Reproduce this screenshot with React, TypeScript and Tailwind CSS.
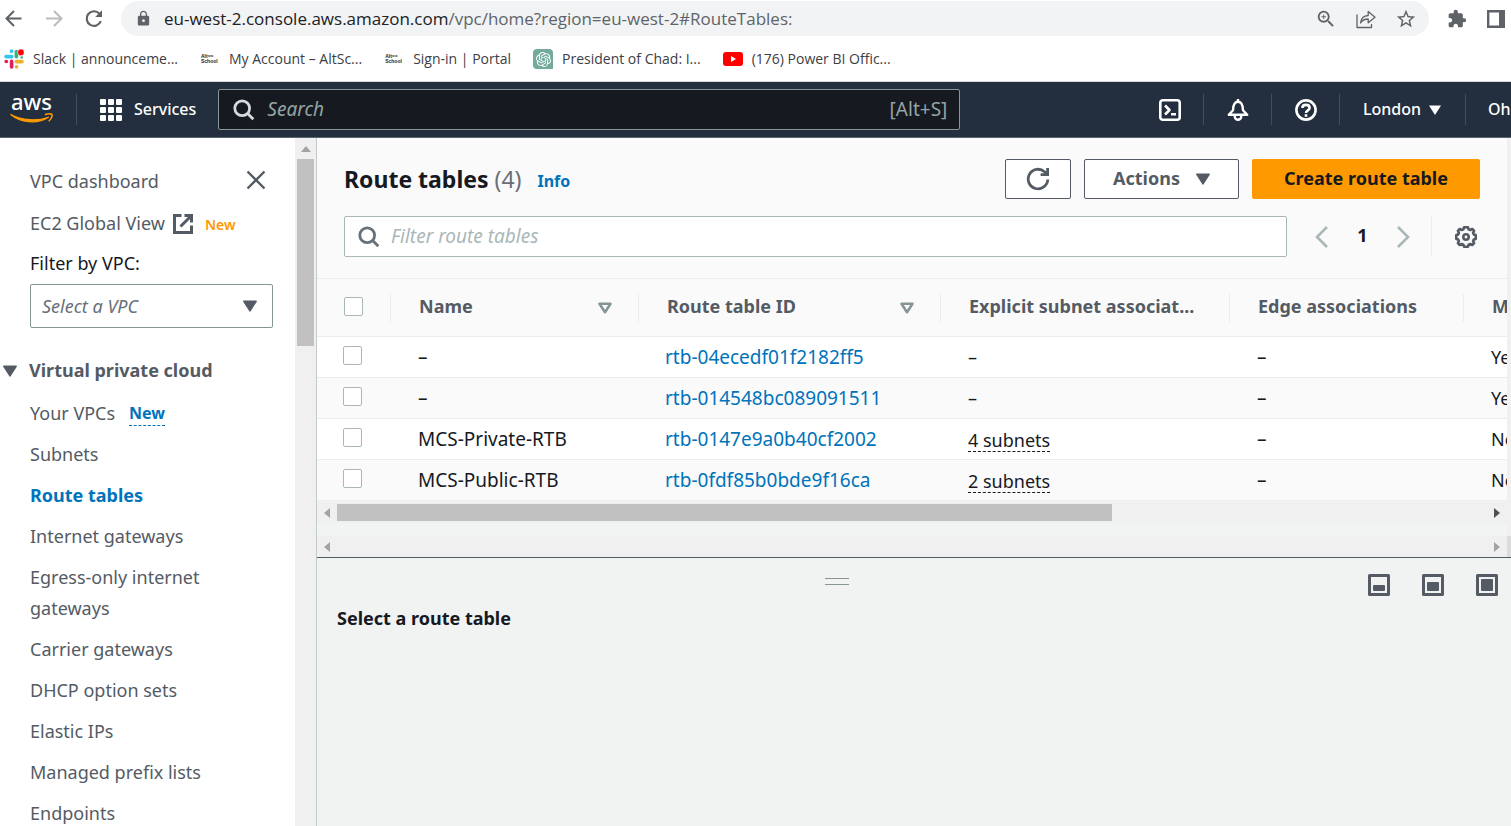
import { useState } from "react";
import type { ReactNode } from "react";
import { MdExtension, MdLock, MdOutlineZoomIn, MdStarBorder } from "react-icons/md";
import { SiOpenai } from "react-icons/si";

type RouteTable = {
  name: string;
  id: string;
  subnets: string;
  edge: string;
  main: string;
};

const routeTables: RouteTable[] = [
  { name: "–", id: "rtb-04ecedf01f2182ff5", subnets: "–", edge: "–", main: "Yes" },
  { name: "–", id: "rtb-014548bc089091511", subnets: "–", edge: "–", main: "Yes" },
  { name: "MCS-Private-RTB", id: "rtb-0147e9a0b40cf2002", subnets: "4 subnets", edge: "–", main: "No" },
  { name: "MCS-Public-RTB", id: "rtb-0fdf85b0bde9f16ca", subnets: "2 subnets", edge: "–", main: "No" },
];

const vpcLinks = [
  "Your VPCs",
  "Subnets",
  "Route tables",
  "Internet gateways",
  "Egress-only internet gateways",
  "Carrier gateways",
  "DHCP option sets",
  "Elastic IPs",
  "Managed prefix lists",
  "Endpoints",
];

function CaretDown({ className = "" }: { className?: string }) {
  return (
    <svg viewBox="0 0 14 12" className={`h-3 w-3.5 shrink-0 ${className}`} fill="currentColor" stroke="currentColor" strokeWidth="1.6" strokeLinejoin="round" aria-hidden="true">
      <path d="M.9 1.200h12.200L7 10.800z" />
    </svg>
  );
}

function SortIcon() {
  return (
    <svg viewBox="0 0 14 12" className="h-3 w-3.5 shrink-0 text-[#879596]" fill="none" stroke="currentColor" strokeWidth="2.6" strokeLinejoin="round" aria-hidden="true">
      <path d="M1.500 1.800h11L7 10.200z" />
    </svg>
  );
}

function SearchIcon({ className = "" }: { className?: string }) {
  return (
    <svg viewBox="0 0 22 22" className={`h-[22px] w-[22px] shrink-0 ${className}`} fill="none" stroke="currentColor" strokeWidth="2.800" aria-hidden="true">
      <circle cx="9.200" cy="9.200" r="7.400" />
      <path d="M14.300 14.300l6 6" />
    </svg>
  );
}

function SlackIcon() {
  return (
    <svg viewBox="0 0 20 20" className="h-5 w-5" fill="none" strokeLinecap="round" strokeWidth="3.600" aria-hidden="true">
      <path d="M2 7.600h5.800M7.500 2v.4" stroke="#36c5f0" />
      <path d="M12.400 2.500v5.300" stroke="#2eb67d" />
      <path d="M12.400 12.600h5.600M12.600 17.800v.2" stroke="#ecb22e" />
      <path d="M7.600 12.400v5.600M2.200 12.500h.2" stroke="#e01e5a" />
      <circle cx="17" cy="3.400" r="3.400" fill="#f00" stroke="#fff" strokeWidth=".6" />
      <path d="M17.600 8.400h.2" stroke="#2eb67d" strokeWidth="2.400" />
    </svg>
  );
}

function AltSchoolIcon() {
  return (
    <span className="flex w-5 flex-col justify-center pl-px font-['Liberation_Sans',sans-serif] text-[5px] leading-[5px] font-bold text-[#222]" aria-hidden="true">
      <span>Alt==</span>
      <span>School</span>
    </span>
  );
}

function ChatIcon() {
  return (
    <span className="flex h-5 w-5 items-center justify-center rounded-sm rounded-br-none bg-[#74aa9c] text-white">
      <SiOpenai size={15} />
    </span>
  );
}

function YoutubeIcon() {
  return (
    <svg viewBox="0 0 20 14" className="h-3.5 w-5" aria-hidden="true">
      <rect width="20" height="14" rx="3" fill="#f00" />
      <path d="M8 4l5 3-5 3z" fill="#fff" />
    </svg>
  );
}

const bookmarks: { label: string; icon: ReactNode }[] = [
  { label: "Slack | announceme...", icon: <SlackIcon /> },
  { label: "My Account – AltSc...", icon: <AltSchoolIcon /> },
  { label: "Sign-in | Portal", icon: <AltSchoolIcon /> },
  { label: "President of Chad: I...", icon: <ChatIcon /> },
  { label: "(176) Power BI Offic...", icon: <YoutubeIcon /> },
];

function BrowserBar() {
  return (
    <div className="shrink-0 border-b border-[#d5d8dc] bg-white font-['Open_Sans','Noto_Sans',sans-serif]">
      <div className="flex h-[37px] items-center pr-1.5 text-[#5f6368]">
        <div className="flex w-[121px] shrink-0 items-center gap-5 pl-1">
          <button type="button" aria-label="Back" className="flex h-5 w-5 items-center justify-center">
            <svg viewBox="0 0 20 20" className="h-5 w-5" fill="none" stroke="currentColor" strokeWidth="2">
              <path d="M17.500 9.500H2.500M10 2L2.500 9.500 10 17" />
            </svg>
          </button>
          <button type="button" aria-label="Forward" className="flex h-5 w-5 items-center justify-center text-[#babcbe]">
            <svg viewBox="0 0 20 20" className="h-5 w-5" fill="none" stroke="currentColor" strokeWidth="2">
              <path d="M2 9.500h15M10 2l7.500 7.500L10 17" />
            </svg>
          </button>
          <button type="button" aria-label="Reload" className="flex h-5 w-5 items-center justify-center">
            <svg viewBox="0 0 20 20" className="h-5 w-5" fill="none" stroke="currentColor" strokeWidth="2.200">
              <path d="M16.800 12.200A7.300 7.300 0 1 1 15.300 4.500" />
              <path d="M18 1.200v6.800h-6.800z" fill="currentColor" stroke="none" />
            </svg>
          </button>
        </div>
        <div className="flex h-[35px] min-w-0 flex-1 items-center rounded-full bg-[#f1f3f4] pr-3 pl-[14px]">
          <MdLock size={17} className="shrink-0" />
          <p className="ml-3 min-w-0 flex-1 truncate text-[17px] leading-6 text-[#5f6368]">
            <span className="text-[#202124]">eu-west-2.console.aws.amazon.com</span>
            /vpc/home?region=eu-west-2#RouteTables:
          </p>
          <div className="flex items-center gap-[19px]">
            <button type="button" aria-label="Zoom">
              <MdOutlineZoomIn size={22} />
            </button>
            <button type="button" aria-label="Share">
              <svg viewBox="0 0 20 20" className="h-5 w-5" fill="none" stroke="currentColor" strokeWidth="1.300" strokeLinejoin="round">
                <path d="M1 5.500v13h14.500v-3.500" />
                <path d="M4.500 14c.6-4.800 3.200-7.300 7.700-7.500V2.500L19 8.200l-6.800 5.600V10c-3.400 0-5.900 1.200-7.700 4z" />
              </svg>
            </button>
            <button type="button" aria-label="Bookmark this tab">
              <MdStarBorder size={22} />
            </button>
          </div>
        </div>
        <div className="ml-[18px] flex items-center gap-5">
          <button type="button" aria-label="Extensions">
            <MdExtension size={20} />
          </button>
          <button type="button" aria-label="Side panel">
            <svg viewBox="0 0 18 18" className="h-[18px] w-[18px]" fill="none">
              <path d="M1.200 1.200h15.600v15.600H1.200z" stroke="currentColor" strokeWidth="2.400" />
              <path d="M12 1h5v16h-5z" fill="currentColor" />
            </svg>
          </button>
        </div>
      </div>
      <nav aria-label="Bookmarks" className="flex h-11 items-center gap-[22px] pl-1">
        {bookmarks.map((b) => (
          <a key={b.label} href="#" className="flex items-center gap-[9px] text-[14px] leading-5 whitespace-nowrap text-[#3c4043]">
            {b.icon}
            {b.label}
          </a>
        ))}
      </nav>
    </div>
  );
}

function ConsoleHeader() {
  return (
    <header className="flex h-14 shrink-0 items-center overflow-hidden border-b border-[#5a6472] bg-[#232f3e] text-white">
      <a href="#" aria-label="AWS home" className="ml-2.5 flex w-[43px] shrink-0 flex-col items-center">
        <span className="text-[22px] leading-[15px] font-medium">aws</span>
        <svg viewBox="0 0 43 12" className="mt-1 h-3 w-[43px]" fill="none" stroke="#f90" strokeLinecap="round" strokeLinejoin="round" aria-hidden="true">
          <path d="M.8 1.500C10 9.500 27 11.800 38.500 4.200 27 8.500 12 7.500.8 1.500z" fill="#f90" strokeWidth="1.200" />
          <path d="M35.500 1.400c2-.8 5.500-.8 6.300 0 .5 1.200-.4 4.200-2.600 6.400" strokeWidth="1.600" />
        </svg>
      </a>
      <span className="ml-[23px] h-[31px] w-px shrink-0 bg-[#414d5c]" />
      <button type="button" className="ml-[23px] flex shrink-0 items-center gap-3 text-[16px] leading-6 font-medium">
        <svg viewBox="0 0 22 22" className="h-[22px] w-[22px]" fill="currentColor" aria-hidden="true">
          {[0, 8, 16].map((y) =>
            [0, 8, 16].map((x) => <rect key={`${x}-${y}`} x={x} y={y} width="6" height="6" rx="1" />),
          )}
        </svg>
        <span className="pb-0.5">Services</span>
      </button>
      <label className="ml-[22px] flex h-[41px] max-w-[742px] min-w-0 flex-1 items-center rounded-xs border border-[#879596] bg-[#16191f] pr-3 pl-[14px] text-[#95a5a6]">
        <SearchIcon className="text-[#d5dbdb]" />
        <input
          type="search"
          aria-label="Search"
          placeholder="Search"
          className="ml-3 min-w-0 flex-1 bg-transparent text-[19px] italic outline-none placeholder:text-[#95a5a6]"
        />
        <span className="text-[19px]">[Alt+S]</span>
      </label>
      <div className="ml-auto flex shrink-0 items-center">
        <button type="button" aria-label="CloudShell" className="flex h-[31px] w-[68px] items-center justify-center border-r border-[#414d5c]">
          <svg viewBox="0 0 22 22" className="h-[22px] w-[22px]" fill="none" stroke="currentColor" strokeWidth="2.600" strokeLinejoin="round">
            <rect x="1.300" y="1.300" width="19.400" height="19.400" rx="2.500" />
            <path d="M6 6.500l4.500 4.500L6 15.500M12 15.300h5" />
          </svg>
        </button>
        <button type="button" aria-label="Notifications" className="flex h-[31px] w-[68px] items-center justify-center border-r border-[#414d5c]">
          <svg viewBox="0 0 22 22" className="h-[22px] w-[22px]" fill="none" stroke="currentColor" strokeWidth="2.400" strokeLinejoin="round">
            <path d="M11 0v3" />
            <path d="M1.800 15.800h18.400L16 11.200C15.800 6 14.500 2.800 11 2.800S6.200 6 6 11.200z" />
            <path d="M7.800 16.500v1.300a3.200 3 0 0 0 6.400 0v-1.300" />
          </svg>
        </button>
        <button type="button" aria-label="Help" className="flex h-[31px] w-[68px] items-center justify-center border-r border-[#414d5c]">
          <svg viewBox="0 0 22 22" className="h-[22px] w-[22px]" fill="none" stroke="currentColor" strokeWidth="2.600">
            <circle cx="11" cy="11" r="9.600" />
            <path d="M7.400 9c0-4.200 7.200-4.200 7.200 0 0 2.500-3.600 2.200-3.600 5" />
            <path d="M11 15.200v2.600" />
          </svg>
        </button>
        <button type="button" className="flex h-[31px] w-[126px] items-center gap-2 border-r border-[#414d5c] pl-[23px] text-[16px] font-medium">
          <span className="pb-0.5">London</span>
          <svg viewBox="0 0 12 10" className="h-2.5 w-3" fill="currentColor" aria-hidden="true">
            <path d="M0 .5h12L6 10z" />
          </svg>
        </button>
        <button type="button" className="h-[31px] w-[45px] overflow-hidden pb-0.5 pl-[22px] text-left text-[16px] font-medium whitespace-nowrap">
          Oh
        </button>
      </div>
    </header>
  );
}

function Sidebar() {
  return (
    <aside className="flex w-[316px] shrink-0 bg-white text-[18px] leading-[31px] text-[#545b64]">
      <div className="min-w-0 flex-1 overflow-hidden pt-7">
        <div className="flex flex-col gap-2.5 pr-[22px] pl-[30px]">
          <div className="flex items-center justify-between">
            <a href="#">VPC dashboard</a>
            <button type="button" aria-label="Close navigation" className="mr-[7px] pb-1">
              <svg viewBox="0 0 20 20" className="h-5 w-5" fill="none" stroke="currentColor" strokeWidth="2.400">
                <path d="M1.500 1.500l17 17M18.500 1.500l-17 17" />
              </svg>
            </button>
          </div>
          <div className="flex items-center">
            <a href="#" className="flex items-center gap-2">
              EC2 Global View
              <svg viewBox="0 0 20 20" className="h-5 w-5" fill="none" stroke="currentColor" strokeWidth="3" aria-hidden="true">
                <path d="M8.500 1.500h-7v17h17v-7" />
                <path d="M11.500 1.500h7v7M18 2L7.500 12.500" />
              </svg>
            </a>
            <span className="ml-3 pt-0.5 text-[14px] font-semibold text-[#ff9900]">New</span>
          </div>
        </div>
        <div className="mt-2 pr-[22px] pl-[30px]">
          <label htmlFor="vpc-filter" className="block text-[#16191f]">
            Filter by VPC:
          </label>
          <div className="relative mt-[5px]">
            <select
              id="vpc-filter"
              className="h-11 w-full appearance-none rounded-xs border border-[#879596] bg-white pl-[11px] text-[18px] text-[#687078] italic outline-none"
            >
              <option>Select a VPC</option>
            </select>
            <CaretDown className="pointer-events-none absolute top-4 right-4 text-[#545b64]" />
          </div>
        </div>
        <button type="button" className="mt-[27px] flex items-center gap-3 pl-[3px] font-bold">
          <CaretDown />
          Virtual private cloud
        </button>
        <ul className="mt-3 flex flex-col gap-2.5 pr-[22px] pl-[30px]">
          {vpcLinks.map((link) => (
            <li key={link} className="flex items-center">
              <a href="#" className={link === "Route tables" ? "font-bold text-[#0073bb]" : ""}>
                {link}
              </a>
              {link === "Your VPCs" && (
                <button type="button" className="ml-3.5 border-b border-dashed border-[#0073bb] text-[16px] leading-6 font-bold text-[#0073bb]">
                  New
                </button>
              )}
            </li>
          ))}
        </ul>
      </div>
      <div className="w-[21px] shrink-0 bg-[#f0f0f0] px-0.5" aria-hidden="true">
        <div className="flex h-[21px] items-center justify-center">
          <svg viewBox="0 0 10 6" className="h-1.5 w-2.5" fill="#a3a3a3">
            <path d="M5 0l5 6H0z" />
          </svg>
        </div>
        <div className="h-[187px] bg-[#c1c1c1]" />
      </div>
    </aside>
  );
}

function ScrollArrow({ direction, color }: { direction: "left" | "right"; color: string }) {
  return (
    <span className="flex w-5 shrink-0 items-center justify-center">
      <svg viewBox="0 0 6 10" className="h-2.5 w-1.5" fill={color}>
        <path d={direction === "left" ? "M6 0v10L0 5z" : "M0 0v10l6-5z"} />
      </svg>
    </span>
  );
}

function HeaderCell({ label, sortable, last }: { label: string; sortable?: boolean; last?: boolean }) {
  return (
    <th scope="col" className="p-0 text-left font-bold">
      <div className={`flex h-7 items-center justify-between pr-[26px] pl-7 ${last ? "" : "border-r border-[#eaeded]"}`}>
        <span className="pb-1 whitespace-nowrap">{label}</span>
        {sortable && <SortIcon />}
      </div>
    </th>
  );
}

function Tick({ label, checked, onChange }: { label: string; checked: boolean; onChange: () => void }) {
  return (
    <input
      type="checkbox"
      aria-label={label}
      checked={checked}
      onChange={onChange}
      className="mb-[3px] block h-[19px] w-[19px] appearance-none rounded-xs border border-[#aab7b8] bg-white checked:bg-[#0073bb]"
    />
  );
}

function RouteTableGrid() {
  const [selected, setSelected] = useState<string[]>([]);
  const toggle = (id: string) =>
    setSelected((s) => (s.includes(id) ? s.filter((x) => x !== id) : [...s, id]));
  const all = selected.length === routeTables.length;

  return (
    <div className="overflow-hidden pb-px">
      <table className="w-[1765px] table-fixed border-collapse text-[19px] leading-6">
        <colgroup>
          <col className="w-[74px]" />
          <col className="w-[248px]" />
          <col className="w-[302px]" />
          <col className="w-[289px]" />
          <col className="w-[234px]" />
          <col />
        </colgroup>
        <thead className="text-[18px]">
          <tr className="h-[58px] border-y border-[#eaeded] bg-[#fafafa] text-[#545b64]">
            <th scope="col" className="p-0">
              <div className="flex h-7 items-center border-r border-[#eaeded] pl-[27px]">
                <Tick
                  label="Select all route tables"
                  checked={all}
                  onChange={() => setSelected(all ? [] : routeTables.map((r) => r.id))}
                />
              </div>
            </th>
            <HeaderCell label="Name" sortable />
            <HeaderCell label="Route table ID" sortable />
            <HeaderCell label="Explicit subnet associat..." />
            <HeaderCell label="Edge associations" />
            <HeaderCell label="Main" last />
          </tr>
        </thead>
        <tbody className="text-[#16191f]">
          {routeTables.map((r) => (
            <tr key={r.id} className="h-[41px] border-b border-[#eaeded] bg-white even:bg-[#fafafa]">
              <td className="p-0 pl-[26px]">
                <Tick label={`Select ${r.id}`} checked={selected.includes(r.id)} onChange={() => toggle(r.id)} />
              </td>
              <td className="p-0 pl-[27px]">{r.name}</td>
              <td className="p-0 pl-[26px]">
                <a href="#" className="text-[#0073bb]">
                  {r.id}
                </a>
              </td>
              <td className="p-0 pl-[27px] text-[18px]">
                {r.subnets === "–" ? (
                  r.subnets
                ) : (
                  <button type="button" className="mt-0.5 block border-b border-dashed border-[#16191f] leading-[22px]">
                    {r.subnets}
                  </button>
                )}
              </td>
              <td className="p-0 pl-[27px]">{r.edge}</td>
              <td className="p-0 pl-[27px] text-[18px]">{r.main}</td>
            </tr>
          ))}
        </tbody>
      </table>
    </div>
  );
}

function RouteTablesPanel() {
  return (
    <section className="flex shrink-0 border-b border-[#545b64] bg-[#f0f0f0]">
      <div className="min-w-0 flex-1 bg-[#f2f3f3]">
        <div className="bg-[#fafafa] pt-[21px] pr-[27px] pb-[21px] pl-[27px]">
          <div className="flex h-10 items-center">
            <h1 className="text-[23px] leading-8 font-bold text-[#16191f]">
              Route tables <span className="font-normal text-[#687078]">(4)</span>
            </h1>
            <a href="#" className="mt-1 ml-4 text-[16px] font-bold text-[#0073bb]">
              Info
            </a>
            <div className="ml-auto flex gap-[13px] text-[18px] font-bold text-[#545b64]">
              <button type="button" aria-label="Refresh" className="flex h-10 w-[66px] items-center justify-center rounded-xs border border-[#545b64] bg-white">
                <svg viewBox="0 0 24 24" className="h-6 w-6" fill="none" stroke="currentColor" strokeWidth="2.800">
                  <path d="M21.800 12.500A9.800 9.800 0 1 1 18.500 4.700L21.500 7.500" />
                  <path d="M21.600 1v6.600h-7" />
                </svg>
              </button>
              <button type="button" className="flex h-10 w-[155px] items-center justify-center gap-4 rounded-xs border border-[#545b64] bg-white">
                <span className="pb-0.5">Actions</span>
                <CaretDown />
              </button>
              <button type="button" className="h-10 w-[228px] rounded-xs bg-[#ff9900] pb-0.5 text-[#16191f]">
                Create route table
              </button>
            </div>
          </div>
          <div className="mt-[17px] flex items-center">
            <label className="flex h-[41px] min-w-0 flex-1 items-center rounded-xs border border-[#aab7b8] bg-white px-[13px]">
              <SearchIcon className="text-[#687078]" />
              <input
                type="search"
                aria-label="Filter route tables"
                placeholder="Filter route tables"
                className="ml-[11px] min-w-0 flex-1 bg-transparent text-[19px] italic outline-none placeholder:text-[#aab7b8]"
              />
            </label>
            <div className="ml-7 flex items-center text-[#aab7b8]">
              <button type="button" aria-label="Previous page">
                <svg viewBox="0 0 13 22" className="h-[22px] w-[13px]" fill="none" stroke="currentColor" strokeWidth="2.600">
                  <path d="M12 1L2 11l10 10" />
                </svg>
              </button>
              <button type="button" className="w-[69px] pb-0.5 text-[18px] font-bold text-[#16191f]">
                1
              </button>
              <button type="button" aria-label="Next page">
                <svg viewBox="0 0 13 22" className="h-[22px] w-[13px]" fill="none" stroke="currentColor" strokeWidth="2.600">
                  <path d="M1 1l10 10L1 21" />
                </svg>
              </button>
            </div>
            <span className="ml-[21px] h-10 w-px bg-[#eaeded]" />
            <button type="button" aria-label="Preferences" className="mr-[3px] ml-[23px] text-[#545b64]">
              <svg viewBox="0 0 22 22" className="h-[22px] w-[22px]" fill="none" stroke="currentColor" strokeWidth="2.600" strokeLinejoin="round">
                <path d="M9 1.300h4l.6 2 1.700.7 2-1L19.100 4.800l-1 2 .7 1.700 1.900.6v3.800l-1.900.6-.7 1.700 1 2-1.800 1.800-2-1-1.700.7-.6 2H9l-.6-2-1.700-.7-2 1L2.900 17.200l1-2-.7-1.700-1.900-.6V9.100l1.900-.6.7-1.700-1-2L4.700 3l2 1 1.700-.7z" />
                <circle cx="11" cy="11" r="2.700" />
              </svg>
            </button>
          </div>
        </div>
        <RouteTableGrid />
        <div className="flex h-[21px] bg-[#f0f0f0]" aria-hidden="true">
          <ScrollArrow direction="left" color="#a3a3a3" />
          <div className="flex flex-1 py-0.5">
            <div className="w-[67.4%] bg-[#c1c1c1]" />
          </div>
          <ScrollArrow direction="right" color="#505050" />
        </div>
        <div className="mt-[13px] flex h-[21px] justify-between bg-[#f0f0f0]" aria-hidden="true">
          <ScrollArrow direction="left" color="#a3a3a3" />
          <ScrollArrow direction="right" color="#a3a3a3" />
        </div>
      </div>
      <div className="flex w-1 shrink-0 flex-col justify-end" aria-hidden="true">
        <div className="h-[21px] bg-[#dcdcdc]" />
      </div>
    </section>
  );
}

function LayoutButton({ label, inner }: { label: string; inner: ReactNode }) {
  return (
    <button type="button" aria-label={label}>
      <svg viewBox="0 0 22 22" className="h-[22px] w-[22px]" fill="#545b64">
        <rect x="1.500" y="1.500" width="19" height="19" fill="none" stroke="#545b64" strokeWidth="3" strokeLinejoin="round" />
        {inner}
      </svg>
    </button>
  );
}

function SplitPanel() {
  return (
    <section className="min-h-0 flex-1 bg-[#f1f3f3] pr-[13px] pl-5">
      <div className="flex pt-4">
        <div className="mr-[31px] flex flex-1 justify-center">
          <button type="button" aria-label="Resize panel" className="mt-1 flex h-[7px] w-6 flex-col justify-between">
            <span className="h-px w-full bg-[#879596]" />
            <span className="h-px w-full bg-[#879596]" />
          </button>
        </div>
        <div className="flex gap-8">
          <LayoutButton label="Small panel" inner={<rect x="5" y="11" width="12" height="6" rx="1" />} />
          <LayoutButton label="Medium panel" inner={<rect x="5" y="8" width="12" height="9" rx="1" />} />
          <LayoutButton label="Full panel" inner={<rect x="5" y="5" width="12" height="12" rx="1" />} />
        </div>
      </div>
      <h2 className="mt-2.5 text-[18px] leading-6 font-bold text-[#16191f]">Select a route table</h2>
    </section>
  );
}

export default function App() {
  return (
    <div className="flex h-screen flex-col overflow-hidden bg-white font-['Noto_Sans','Open_Sans',sans-serif]">
      <BrowserBar />
      <ConsoleHeader />
      <div className="flex min-h-0 flex-1">
        <Sidebar />
        <main className="flex min-w-0 flex-1 flex-col border-l border-[#c3caca]">
          <RouteTablesPanel />
          <SplitPanel />
        </main>
      </div>
    </div>
  );
}
